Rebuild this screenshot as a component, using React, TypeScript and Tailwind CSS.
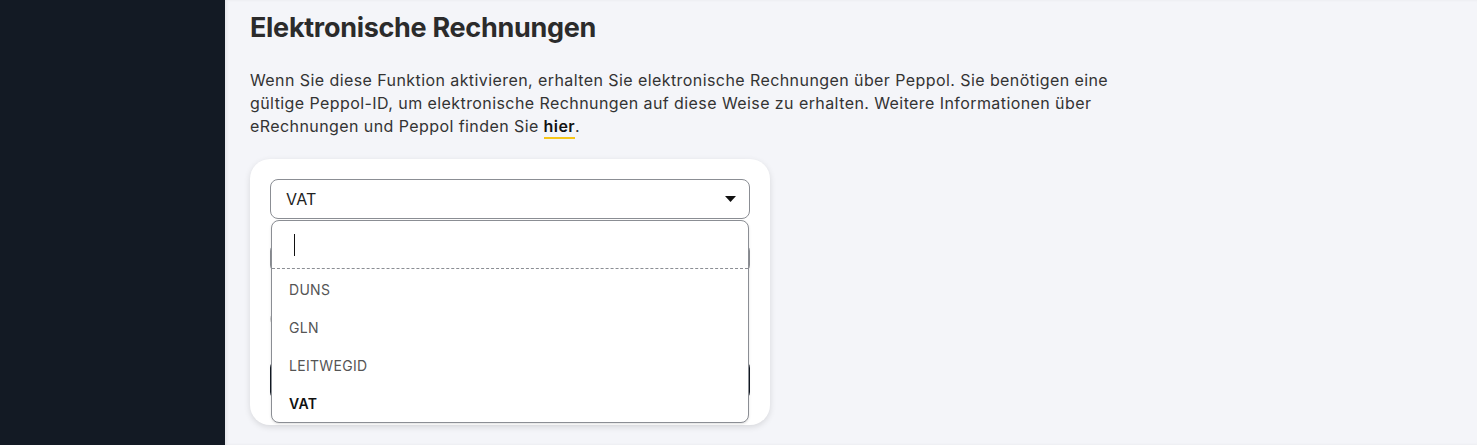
import React from 'react';

const options = ['DUNS', 'GLN', 'LEITWEGID', 'VAT'];

const Sidebar: React.FC = () => <aside className="w-[225px] shrink-0 bg-[#131a24]" />;

const IdSelect: React.FC = () => (
  <div className="relative">
    <div className="flex h-[40px] items-center justify-between rounded-lg border border-[#8b8e94] bg-white pl-[15px] pr-[13px]">
      <span className="text-[16px] tracking-[0.2px] text-[#222]">VAT</span>
      <svg width="11" height="6" viewBox="0 0 11 6" className="fill-[#111]">
        <path d="M0 0h11L5.5 6z" />
      </svg>
    </div>

    {/* open list, lies over the form below */}
    <div className="absolute left-px right-px top-[41px] z-10 overflow-hidden rounded-lg border border-[#8b8e94] bg-white shadow-sm">
      <div className="flex h-[48px] items-center border-b border-dashed border-[#8b8e94] px-[22px]">
        <span className="h-[22px] w-px bg-[#111]" />
      </div>
      <ul className="pt-px">
        {options.map((o) => (
          <li
            key={o}
            className={`flex h-[38px] items-center px-[17px] text-[14px] tracking-[0.3px] ${
              o === 'VAT' ? 'font-semibold text-[#111]' : 'text-[#555]'
            }`}
          >
            {o}
          </li>
        ))}
      </ul>
    </div>
  </div>
);

const App: React.FC = () => {
  return (
    <div className="flex h-[445px] overflow-hidden bg-[#f4f5f9] font-['Inter',sans-serif]">
      <Sidebar />
      <main className="flex-1 px-[25px] pt-[11px] shadow-[inset_2px_0_3px_rgba(0,0,0,0.06)]">
        <h1 className="text-[27px] font-bold leading-[34px] tracking-[-0.3px] text-[#2b2b2b]">Elektronische Rechnungen</h1>
        <p className="mt-[24px] max-w-[885px] text-[16px] leading-[23px] tracking-[0.42px] text-[#333]">
          Wenn Sie diese Funktion aktivieren, erhalten Sie elektronische Rechnungen über Peppol. Sie benötigen eine
          gültige Peppol-ID, um elektronische Rechnungen auf diese Weise zu erhalten. Weitere Informationen über
          eRechnungen und Peppol finden Sie{' '}
          <a href="#" className="border-b-2 border-[#f5c518] pb-px font-semibold text-[#111]">
            hier
          </a>
          .
        </p>

        <div className="mt-[21px] w-[520px] rounded-[20px] bg-white p-[20px] shadow-[0_2px_6px_rgba(0,0,0,0.12)]">
          <IdSelect />
          <div className="mt-[24px] h-[30px] rounded-lg border border-[#8b8e94]" />
          <div className="mt-[38px] flex items-center gap-2">
            <span className="h-[16px] w-[16px] rounded-full border border-[#ccc]" />
          </div>
          <div className="mt-[33px] h-[40px] rounded-lg bg-[#131a24]" />
          <div className="h-[5px]" />
        </div>
      </main>
    </div>
  );
};

export default App;
